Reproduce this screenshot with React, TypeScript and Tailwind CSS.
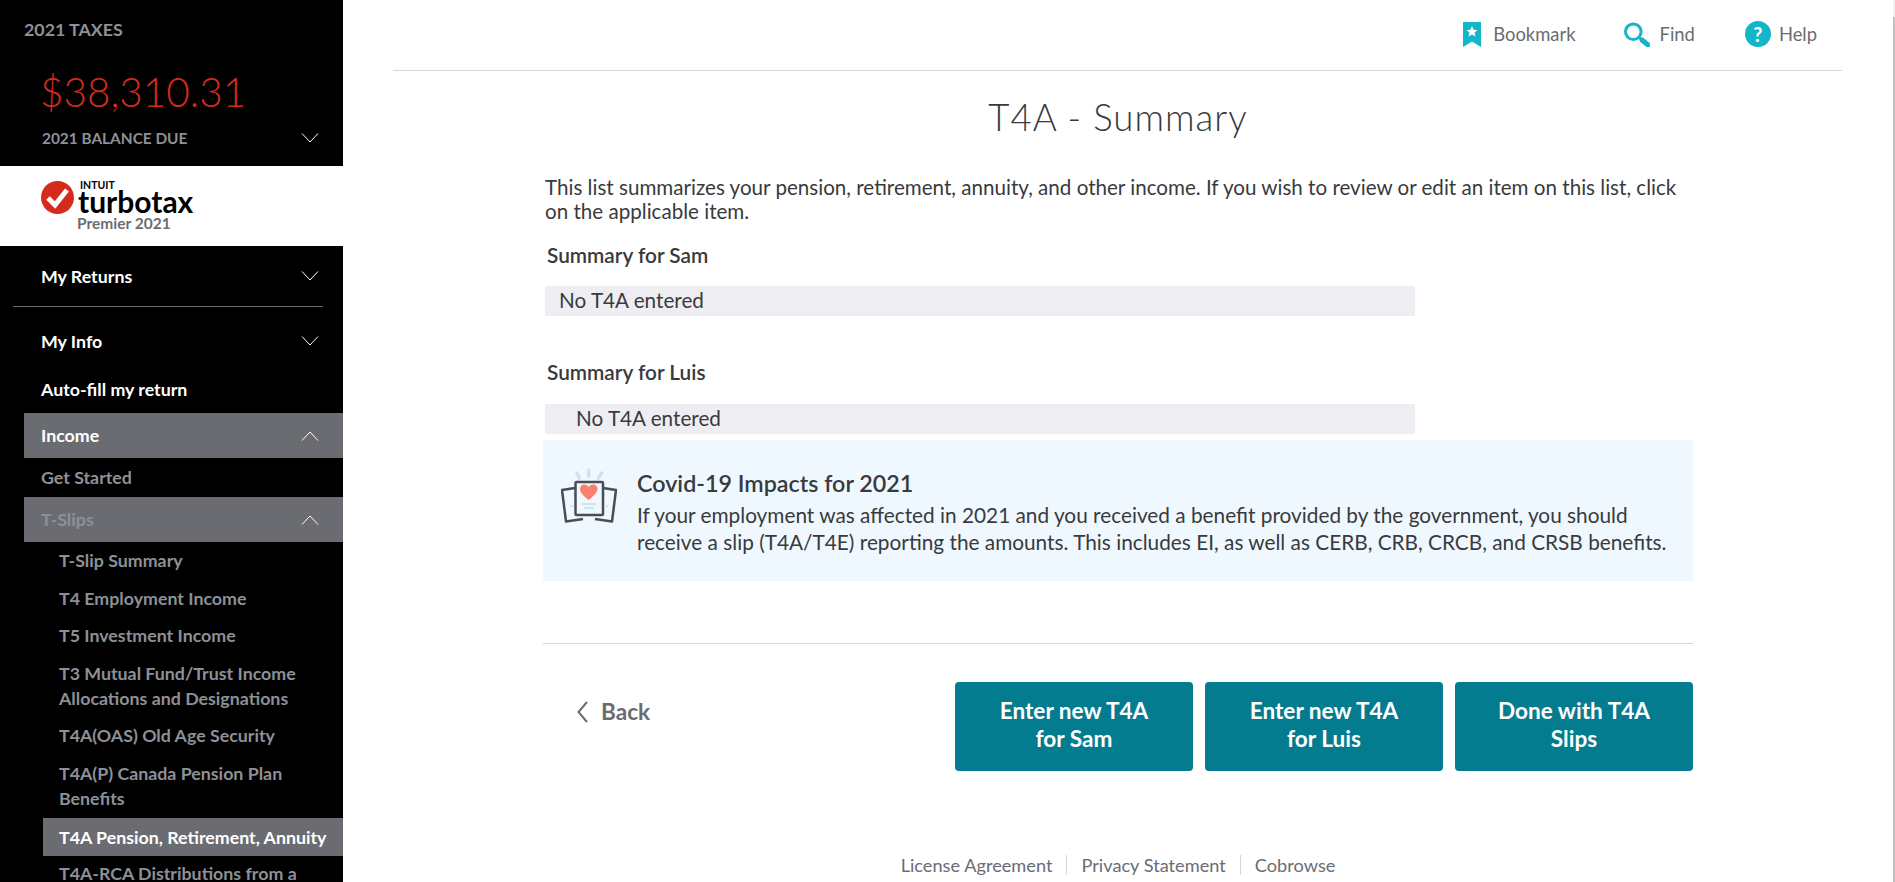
import React from 'react';

const Chevron: React.FC<{ up?: boolean }> = ({ up }) => (
  <svg width="18" height="10" viewBox="0 0 18 10" fill="none" stroke="#ffffff" strokeWidth="1" className="shrink-0">
    {up ? <path d="M1 9.5 L9 1 L17 9.5" /> : <path d="M1 .5 L9 9 L17 .5" />}
  </svg>
);

const slips = [
  { label: 'T-Slip Summary', h: 'h-[38px]' },
  { label: 'T4 Employment Income', h: 'h-[38px]' },
  { label: 'T5 Investment Income', h: 'h-[37px]' },
  { label: 'T3 Mutual Fund/Trust Income Allocations and Designations', h: 'h-[63px]' },
  { label: 'T4A(OAS) Old Age Security', h: 'h-[37px]' },
  { label: 'T4A(P) Canada Pension Plan Benefits', h: 'h-[63px]' },
];

const Logo = () => (
  <div className="h-[80px] bg-white flex pl-[41px] pt-[14px] gap-[4px]">
    <svg width="33" height="33" viewBox="0 0 33 33" className="shrink-0 mt-[1px]">
      <circle cx="16.5" cy="16.5" r="16.5" fill="#d52b1e" />
      <path d="M7 17 L14 24 L26 9" fill="none" stroke="#fff" strokeWidth="5" />
    </svg>
    <div className="flex flex-col">
      <span className="text-[10.5px] leading-[11px] font-bold text-black pl-[2px] uppercase">Intuit</span>
      <span className="text-[30px] leading-[23px] font-bold text-black -mt-[1px]">turbotax<span className="text-[6px] leading-none text-gray-400">.</span></span>
      <span className="text-[15.5px] leading-[18px] font-bold text-[#6b6c72] -ml-[1px]">Premier 2021</span>
    </div>
  </div>
);

const Sidebar = () => (
  <aside className="w-[343px] h-[882px] shrink-0 bg-black overflow-hidden text-[17.8px] font-bold">
    <div className="h-[166px] pt-[19px]">
      <div className="pl-[24px] text-[#8d9096] leading-[20px]">2021 TAXES</div>
      <div className="pl-[40px] mt-[29px] text-[40.5px] leading-[48px] font-light text-[#d52b1e]">$38,310.31</div>
      <div className="pl-[42px] pr-[24px] mt-[12px] flex items-center justify-between text-[15.4px] leading-[20px] text-[#8d9096]">
        <span>2021 BALANCE DUE</span>
        <Chevron />
      </div>
    </div>
    <Logo />
    <div className="h-[60px] pl-[41px] pr-[24px] flex items-center justify-between text-white">
      <span>My Returns</span>
      <Chevron />
    </div>
    <div className="h-px bg-[#6b6c72] ml-[13px] w-[310px]" />
    <div className="h-[68px] pl-[41px] pr-[24px] flex items-center justify-between text-white">
      <span>My Info</span>
      <Chevron />
    </div>
    <div className="h-[38px] pl-[41px] pt-[2px] text-white leading-[24px]">Auto-fill my return</div>
    <div className="ml-[24px] h-[45px] pl-[17px] pr-[24px] flex items-center justify-between bg-[#6b6c72] text-white">
      <span>Income</span>
      <Chevron up />
    </div>
    <div className="h-[39px] pl-[41px] flex items-center text-[#8d9096]">Get Started</div>
    <div className="ml-[24px] h-[45px] pl-[17px] pr-[24px] flex items-center justify-between bg-[#6b6c72] text-[#8d9096]">
      <span>T-Slips</span>
      <Chevron up />
    </div>
    <ul className="-mt-[1px]">
      {slips.map((s) => (
        <li key={s.label} className={`${s.h} pl-[59px] pr-[20px] flex items-center leading-[25px] text-[#8d9096]`}>
          {s.label}
        </li>
      ))}
      <li className="ml-[43px] mt-[1px] h-[38px] pl-[16px] flex items-center bg-[#6b6c72] text-white whitespace-nowrap">T4A Pension, Retirement, Annuity</li>
      <li className="pl-[59px] pr-[20px] pt-[5px] leading-[25px] text-[#8d9096]">T4A-RCA Distributions from a</li>
    </ul>
  </aside>
);

const TopBar = () => (
  <div className="h-[71px] ml-[50px] mr-[51px] border-b border-[#d4d7dc] flex items-start justify-end pt-[21px] pr-[25px] text-[18.4px] leading-[26px] text-[#6b6c72]">
    <div className="flex items-center">
      <svg width="18" height="25" viewBox="0 0 18 25" className="mr-[12px]">
        <path d="M0 0 H18 V25 L9 19.5 L0 25 Z" fill="#13b5c9" />
        <path d="M9 4 L10.6 7.7 L14.5 8 L11.5 10.6 L12.5 14.5 L9 12.4 L5.5 14.5 L6.5 10.6 L3.5 8 L7.4 7.7 Z" fill="#fff" />
      </svg>
      <span>Bookmark</span>
    </div>
    <div className="flex items-center ml-[48px]">
      <svg width="26" height="25" viewBox="0 0 26 25" fill="none" className="mr-[10px]">
        <circle cx="9.3" cy="9.7" r="7.8" stroke="#13b5c9" strokeWidth="3" />
        <path d="M15 15.5 L18 18" stroke="#13b5c9" strokeWidth="2.5" />
        <path d="M18 18 L24 23" stroke="#13b5c9" strokeWidth="5" strokeLinecap="round" />
      </svg>
      <span>Find</span>
    </div>
    <div className="flex items-center ml-[50px]">
      <span className="w-[26px] h-[26px] mr-[8px] rounded-full bg-[#13b5c9] text-white text-[20px] font-bold flex items-center justify-center">?</span>
      <span>Help</span>
    </div>
  </div>
);

const CovidIcon = () => (
  <svg width="56" height="56" viewBox="0 0 56 56" fill="none" className="shrink-0">
    <path d="M27.7 2 V8.5 M16 5 L18.3 10 M40.5 5 L37.5 10" stroke="#cfe3ee" strokeWidth="3.5" strokeLinecap="round" />
    <path d="M14 23 Q10 27 15 33 H41 Q46 27 42 23 Z" fill="#d5e7f0" />
    <path d="M14 20 L1 22 L5 53.5 L22 51" stroke="#4a4d55" strokeWidth="2.5" strokeLinejoin="round" />
    <path d="M42 20 L55 22 L51 53.5 L34 51" stroke="#4a4d55" strokeWidth="2.5" strokeLinejoin="round" />
    <rect x="14.5" y="14" width="27.5" height="33" rx="1" fill="#f0f8fd" stroke="#4a4d55" strokeWidth="2.5" />
    <path d="M27.7 32 C20 26 19 23 19 21 C19 16 25 15 27.7 19 C30.5 15 36.5 16 36.5 21 C36.5 23 35 26 27.7 32 Z" fill="#ff7f6e" />
    <path d="M21 36 H35 M23 40 H33" stroke="#cfe3ee" strokeWidth="2" />
    <path d="M9 38 H13 M43 38 H47" stroke="#d5e7f0" strokeWidth="2" />
  </svg>
);

const actions = ['Enter new T4A for Sam', 'Enter new T4A for Luis', 'Done with T4A Slips'];

const Main = () => (
  <main className="flex-1 min-w-0 h-[882px] overflow-hidden text-[#393a3d]">
    <TopBar />
    <div className="ml-[200px] w-[1150px]">
      <h1 className="text-center text-[36.7px] leading-[48px] font-light tracking-[1px] mt-[22px]">T4A - Summary</h1>
      <p className="pl-[2px] mt-[34px] text-[20.6px] leading-[24px] pr-[10px]">
        This list summarizes your pension, retirement, annuity, and other income. If you wish to review or edit an item on this list, click on the applicable item.
      </p>
      <h2 className="pl-[4px] mt-[20px] text-[20.8px] leading-[24px] font-semibold">Summary for Sam</h2>
      <div className="ml-[2px] mt-[19px] w-[870px] h-[30px] bg-[#eeeef2] pl-[14px] text-[20.7px] leading-[29px]">No T4A entered</div>
      <h2 className="pl-[4px] mt-[44px] text-[20.8px] leading-[24px] font-semibold">Summary for Luis</h2>
      <div className="ml-[2px] mt-[20px] w-[870px] h-[30px] bg-[#eeeef2] pl-[31px] text-[20.7px] leading-[29px]">No T4A entered</div>
      <div className="mt-[6px] h-[141px] bg-[#eff8fe] flex pl-[18px] pt-[28px] gap-[20px]">
        <CovidIcon />
        <div className="mt-[1px]">
          <div className="text-[23.3px] leading-[28px] font-semibold">Covid-19 Impacts for 2021</div>
          <div className="text-[20.8px] leading-[26.5px] mt-[5px] pr-[10px]">
            If your employment was affected in 2021 and you received a benefit provided by the government, you should receive a slip (T4A/T4E) reporting the amounts. This includes EI, as well as CERB, CRB, CRCB, and CRSB benefits.
          </div>
        </div>
      </div>
      <div className="mt-[62px] h-px bg-[#d4d7dc]" />
      <div className="mt-[38px] flex items-start">
        <div className="ml-[34px] mt-[14px] h-[32px] flex items-center text-[22.6px] font-bold text-[#6b6c72]">
          <svg width="11" height="22" viewBox="0 0 11 22" fill="none" stroke="#6b6c72" strokeWidth="2" className="mr-[13px]">
            <path d="M10 1 L1.5 11 L10 21" />
          </svg>
          Back
        </div>
        <div className="ml-auto flex gap-[12px]">
          {actions.map((a) => (
            <button key={a} className="w-[238px] h-[89px] rounded-[4px] bg-[#037c8f] text-white text-[22.6px] leading-[28px] font-bold px-[30px] pb-[3px]">
              {a}
            </button>
          ))}
        </div>
      </div>
    </div>
    <div className="ml-[200px] w-[1150px] mt-[84px] flex justify-center items-center text-[18.2px] leading-[20px] text-[#6b6c72]">
      <span>License Agreement</span>
      <span className="mx-[14px] w-px h-[20px] bg-[#d4d7dc]" />
      <span>Privacy Statement</span>
      <span className="mx-[14px] w-px h-[20px] bg-[#d4d7dc]" />
      <span>Cobrowse</span>
    </div>
  </main>
);

export default function App() {
  return (
    <div className="flex w-full h-[882px] overflow-hidden bg-white" style={{ fontFamily: 'Lato, "Open Sans", sans-serif' }}>
      <Sidebar />
      <Main />
      {/* page scrollbar sliver at the window edge */}
      <div className="w-[2px] shrink-0 bg-[#c1c1c1] border-t-[17px] border-[#f1f1f1]" />
    </div>
  );
}
